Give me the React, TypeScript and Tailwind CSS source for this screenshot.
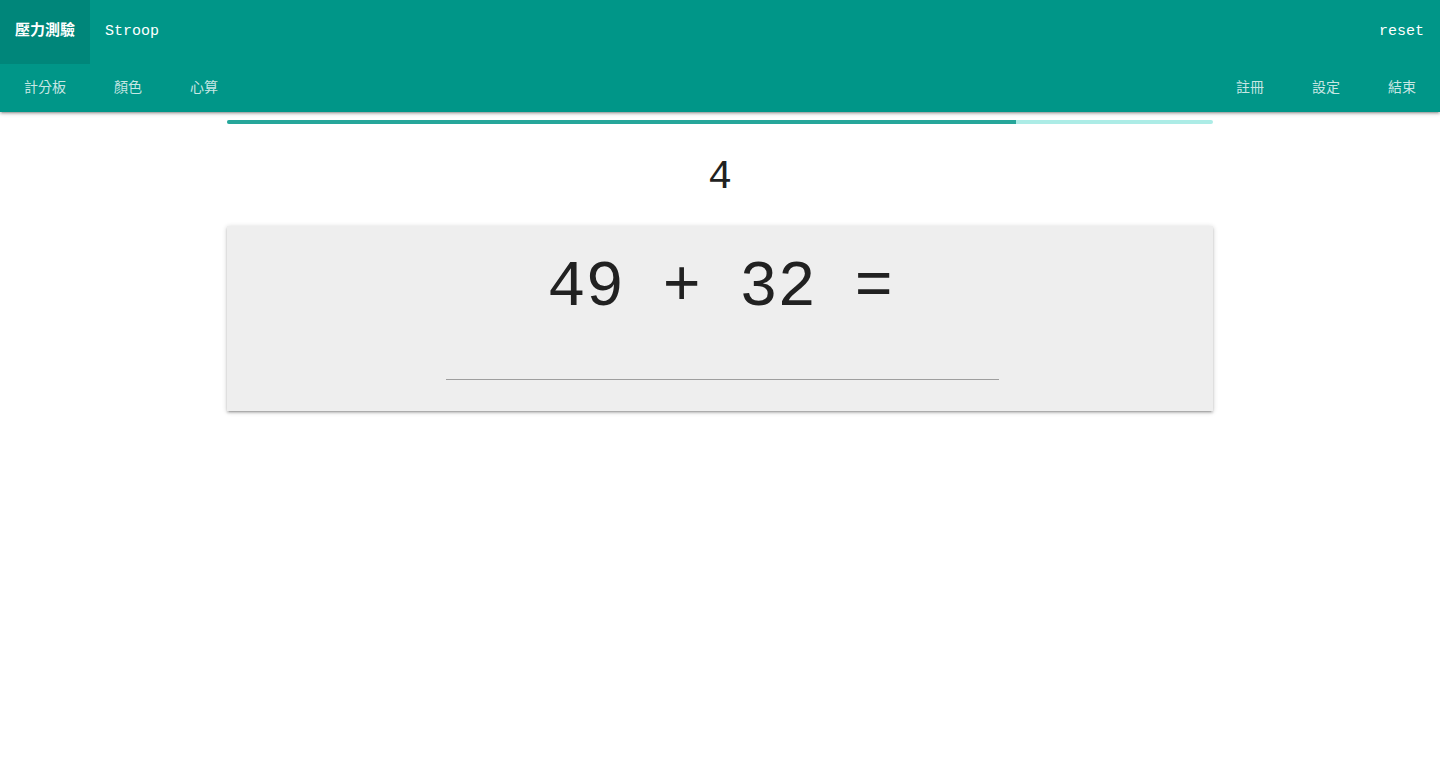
import { useState } from 'react'

const CJK = "font-['Noto_Sans_CJK_TC','Noto_Sans',sans-serif]"
const MONO = "font-['Liberation_Mono',monospace]"

const LEFT_TABS = ['計分板', '顏色', '心算']
const RIGHT_TABS = ['註冊', '設定', '結束']

export default function App() {
  const [answer, setAnswer] = useState('')
  const progress = 80

  return (
    <div className={`min-h-[766px] bg-white ${CJK}`}>
      <nav className="bg-[#009688] text-white shadow-[0_2px_2px_0_rgba(0,0,0,0.14),0_3px_1px_-2px_rgba(0,0,0,0.12),0_1px_5px_0_rgba(0,0,0,0.2)]">
        <div className="flex h-16 items-center">
          <a className="flex h-full items-center bg-[rgba(0,0,0,0.1)] px-[15px] pb-[5px] text-[15px] font-semibold">壓力測驗</a>
          <span className={`ml-[15px] text-[15px] ${MONO}`}>Stroop</span>
          <span className={`ml-auto mr-4 text-[15px] ${MONO}`}>reset</span>
        </div>
        <div className="flex h-12 items-center pb-[5px] text-sm text-[rgba(255,255,255,0.78)]">
          {LEFT_TABS.map(t => (
            <a key={t} className="flex h-full items-center px-6">{t}</a>
          ))}
          <div className="flex-1" />
          {RIGHT_TABS.map(t => (
            <a key={t} className="flex h-full items-center px-6">{t}</a>
          ))}
        </div>
      </nav>

      <main className="mx-auto w-[986px] pt-2">
        <div className="h-1 w-full overflow-hidden rounded-sm bg-[#acece6]">
          <div className="h-full bg-[#26a69a]" style={{ width: `${progress}%` }} />
        </div>

        <div className={`mt-[22px] text-center text-[40px] leading-[64px] text-[#212121] ${MONO}`}>4</div>

        <div className="mt-[16px] h-[185px] bg-[#eeeeee] pt-[14px] shadow-[0_2px_2px_0_rgba(0,0,0,0.14),0_3px_1px_-2px_rgba(0,0,0,0.12),0_1px_5px_0_rgba(0,0,0,0.2)]">
          <div className={`text-center text-[64px] leading-[96px] text-[#212121] ${MONO}`}>49 + 32 =</div>
          <input
            value={answer}
            onChange={e => setAnswer(e.target.value)}
            className={`ml-[219px] block h-[44px] w-[553px] border-b border-[#9e9e9e] bg-transparent text-center text-2xl outline-none ${MONO}`}
          />
        </div>
      </main>
    </div>
  )
}
